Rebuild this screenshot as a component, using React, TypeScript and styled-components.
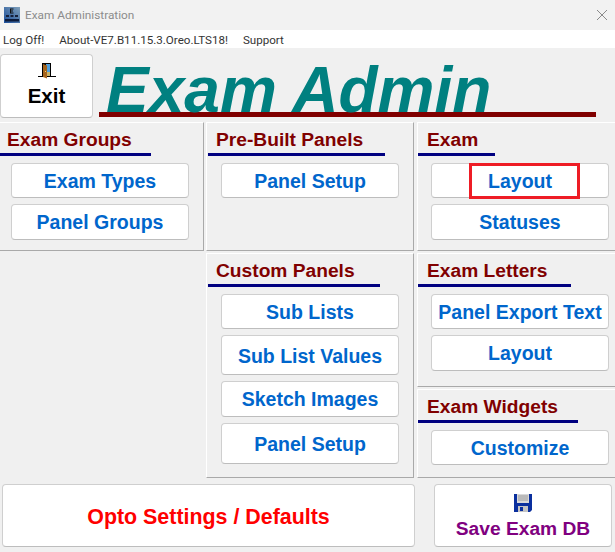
import React from "react";
import styled, { createGlobalStyle } from "styled-components";

const GlobalStyle = createGlobalStyle`
    html, body {
        margin: 0;
        padding: 0;
        background: #f0f0f0;
    }
`;

const Window = styled.div`
    width: 615px;
    height: 552px;
    overflow: hidden;
    background: #f0f0f0;
    font-family: "Liberation Sans", Arial, sans-serif;
`;

const TitleBar = styled.div`
    height: 30px;
    display: flex;
    align-items: center;
    padding: 0 8px 0 4px;
    background: #f2f2f2;
`;

const TitleText = styled.span`
    margin-left: 5px;
    flex: 1;
    font: 11.8px Roboto, sans-serif;
    color: #8c8c8c;
`;

const MenuBar = styled.div`
    height: 18px;
    display: flex;
    align-items: center;
    gap: 15px;
    padding: 2px 0 0 3px;
    box-sizing: border-box;
    background: #fff;
`;

const MenuItem = styled.span`
    font: 11.6px Roboto, sans-serif;
    color: #333;
`;

const Header = styled.div`
    height: 74px;
    display: flex;
    align-items: flex-start;
`;

const Button = styled.div<{ $h?: number; $color?: string }>`
    position: relative;
    box-sizing: border-box;
    height: ${(p) => p.$h ?? 35}px;
    padding-top: ${(p) => (p.$h === 36 ? 0 : 2)}px;
    display: flex;
    flex-direction: column;
    align-items: center;
    justify-content: center;
    background: #fff;
    border: 1px solid #cfcfcf;
    border-bottom-color: #bdbdbd;
    border-radius: 4px;
    font-size: 19.5px;
    font-weight: 700;
    color: ${(p) => p.$color ?? "#0066cc"};
`;

const ExitButton = styled(Button)`
    width: 93px;
    height: 64px;
    margin-top: 6px;
    justify-content: flex-start;
    padding-top: 8px;
    gap: 5px;
    font-size: 20.5px;
    color: #000;
`;

const TitleBlock = styled.div`
    box-sizing: border-box;
    width: 497px;
    height: 69px;
    margin-left: 6px;
    padding: 6px 0 0 7px;
    border-bottom: 5px solid #800000;
    font-size: 64px;
    font-weight: 700;
    font-style: italic;
    line-height: 72px;
    color: #008080;
    white-space: nowrap;
`;

const Columns = styled.div`
    display: flex;
    height: 356px;
`;

const Column = styled.div<{ $w: string; $mr?: number }>`
    display: flex;
    flex-direction: column;
    gap: 2px;
    width: ${(p) => p.$w};
    margin-right: ${(p) => p.$mr ?? 0}px;
`;

const Panel = styled.section<{ $h: number; $noLeft?: boolean; $noRight?: boolean }>`
    box-sizing: border-box;
    height: ${(p) => p.$h}px;
    display: flex;
    flex-direction: column;
    border-top: 1px solid #fff;
    border-left: ${(p) => (p.$noLeft ? "none" : "1px solid #fff")};
    border-right: ${(p) => (p.$noRight ? "none" : "1px solid #a9a9a9")};
    border-bottom: 1px solid #a9a9a9;
`;

const Heading = styled.h2<{ $w: number; $inset: number; $pad: number }>`
    box-sizing: border-box;
    width: ${(p) => p.$w}px;
    height: 33px;
    margin: 0 0 7px ${(p) => p.$inset}px;
    padding: 5px 0 0 ${(p) => p.$pad}px;
    border-bottom: 3px solid #000080;
    font-size: 19.2px;
    font-weight: 700;
    line-height: 23px;
    color: #800000;
    white-space: nowrap;
`;

const ButtonStack = styled.div<{ $left: number }>`
    display: flex;
    flex-direction: column;
    gap: 6px;
    width: 178px;
    margin-left: ${(p) => p.$left}px;
`;

const Highlight = styled.div`
    position: absolute;
    left: 37px;
    top: -1px;
    width: 111px;
    height: 36px;
    box-sizing: border-box;
    border: 3px solid #ee1c25;
`;

const BottomRow = styled.div`
    display: flex;
    padding: 6px 3px 0 2px;
    gap: 19px;
`;

const SettingsButton = styled(Button)`
    width: 413px;
    height: 63px;
    padding-top: 3px;
    font-size: 21.4px;
    color: #ff0000;
`;

const SaveButton = styled(Button)`
    width: 178px;
    height: 63px;
    justify-content: flex-start;
    padding-top: 9px;
    gap: 6px;
    font-size: 19.2px;
    color: #800080;
`;

const CloseIcon = () => (
    <svg width="10" height="10" viewBox="0 0 10 10">
        <path d="M0 0L10 10M10 0L0 10" stroke="#8a8a8a" strokeWidth="1" fill="none" />
    </svg>
);

const AppIcon = () => (
    <svg width="16" height="16" viewBox="0 0 16 16">
        <defs>
            <linearGradient id="chart" x1="0" y1="1" x2="1" y2="0">
                <stop offset="0" stopColor="#1c4f9c" />
                <stop offset="1" stopColor="#7f9fb8" />
            </linearGradient>
        </defs>
        <rect width="16" height="16" fill="url(#chart)" />
        <path d="M6 1.500h3.500v1H7v1h2v1H7v1h2.500v1H6z" fill="#111" />
        <path d="M2 8h3v2H2zM6.500 8h3v2h-3zM11 8h3v2h-3z" fill="#16203a" />
        <rect x="1" y="12" width="14" height="2.500" fill="#0c1a3a" />
    </svg>
);

const DoorIcon = () => (
    <svg width="18" height="16" viewBox="0 0 18 16">
        <rect x="0" y="13" width="18" height="1" fill="#000" />
        <rect x="4" y="0" width="9" height="14" fill="#000" />
        <rect x="8" y="1" width="4" height="12" fill="#4f9fdc" />
        <path d="M8 9h4v4H8z" fill="#c9b36a" />
        <path d="M5 1l4 1.500V15.500L5 14z" fill="#a5641c" />
        <rect x="7" y="8" width="1" height="1" fill="#f5d26a" />
    </svg>
);

const FloppyIcon = () => (
    <svg width="18" height="18" viewBox="0 0 18 18">
        <path d="M0 0h18v16l-2 2H0z" fill="#0a2f9e" />
        <rect x="3" y="0" width="12" height="9" fill="#d9d9d9" />
        <path d="M4 2h10M4 4h10M4 6h10" stroke="#9a9a9a" strokeWidth="1" />
        <rect x="4" y="12" width="10" height="6" fill="#c4c4c4" />
        <rect x="6" y="13" width="3" height="4" fill="#0a2f9e" />
    </svg>
);

export default function App() {
    return (
        <Window>
            <GlobalStyle />
            <TitleBar>
                <AppIcon />
                <TitleText>Exam Administration</TitleText>
                <CloseIcon />
            </TitleBar>
            <MenuBar>
                <MenuItem>Log Off!</MenuItem>
                <MenuItem>About-VE7.B11.15.3.Oreo.LTS18!</MenuItem>
                <MenuItem>Support</MenuItem>
            </MenuBar>
            <Header>
                <ExitButton>
                    <DoorIcon />
                    Exit
                </ExitButton>
                <TitleBlock>Exam Admin</TitleBlock>
            </Header>
            <Columns>
                <Column $w="204px" $mr={2}>
                    <Panel $h={129} $noLeft>
                        <Heading $w={151} $inset={0} $pad={7}>Exam Groups</Heading>
                        <ButtonStack $left={11}>
                            <Button>Exam Types</Button>
                            <Button $h={36}>Panel Groups</Button>
                        </ButtonStack>
                    </Panel>
                </Column>
                <Column $w="208px" $mr={3}>
                    <Panel $h={129}>
                        <Heading $w={177} $inset={1} $pad={8}>Pre-Built Panels</Heading>
                        <ButtonStack $left={14}>
                            <Button>Panel Setup</Button>
                        </ButtonStack>
                    </Panel>
                    <Panel $h={225}>
                        <Heading $w={172} $inset={1} $pad={8}>Custom Panels</Heading>
                        <ButtonStack $left={14}>
                            <Button>Sub Lists</Button>
                            <Button $h={40}>Sub List Values</Button>
                            <Button $h={36}>Sketch Images</Button>
                            <Button $h={41}>Panel Setup</Button>
                        </ButtonStack>
                    </Panel>
                </Column>
                <Column $w="198px">
                    <Panel $h={129} $noRight>
                        <Heading $w={77} $inset={0} $pad={9}>Exam</Heading>
                        <ButtonStack $left={13}>
                            <Button>
                                Layout
                                <Highlight />
                            </Button>
                            <Button $h={36}>Statuses</Button>
                        </ButtonStack>
                    </Panel>
                    <Panel $h={134} $noRight>
                        <Heading $w={153} $inset={0} $pad={9}>Exam Letters</Heading>
                        <ButtonStack $left={13}>
                            <Button>Panel Export Text</Button>
                            <Button $h={36}>Layout</Button>
                        </ButtonStack>
                    </Panel>
                    <Panel $h={89} $noRight>
                        <Heading $w={160} $inset={0} $pad={9}>Exam Widgets</Heading>
                        <ButtonStack $left={13}>
                            <Button>Customize</Button>
                        </ButtonStack>
                    </Panel>
                </Column>
            </Columns>
            <BottomRow>
                <SettingsButton>Opto Settings / Defaults</SettingsButton>
                <SaveButton>
                    <FloppyIcon />
                    Save Exam DB
                </SaveButton>
            </BottomRow>
        </Window>
    );
}
